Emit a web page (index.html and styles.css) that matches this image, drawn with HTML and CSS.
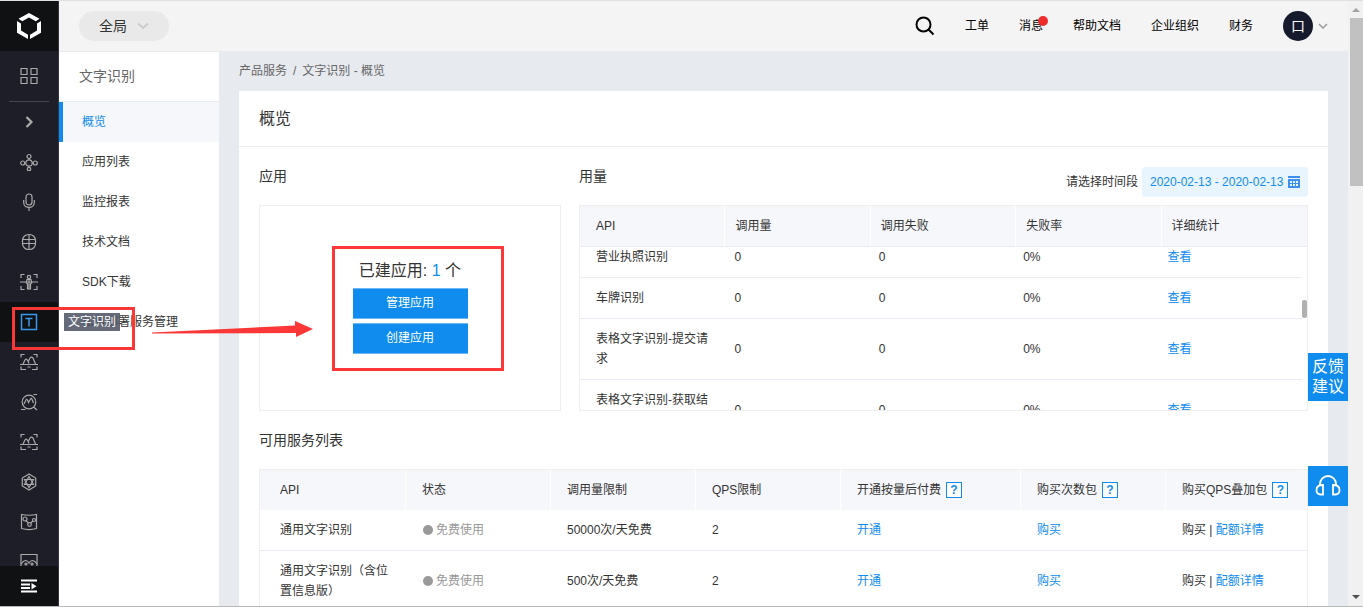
FILE: index.html
```html
<!DOCTYPE html>
<html lang="zh-CN">
<head>
<meta charset="utf-8">
<title>文字识别 - 概览</title>
<link rel="stylesheet" href="styles.css">
</head>
<body>
<div class="window">
  <nav class="rail" aria-label="产品导航">
    <a class="rail-logo" href="#" aria-label="首页">
      <svg width="26" height="28" viewBox="0 0 26 28" fill="#fff"><path d="M13 1 23.500 6.800 19.800 9.200 13 5.400 6.200 9.200 2.500 6.800z"/><path d="M1 9 5 11.400V18.600L12 22.700V27L1 20.700z"/><path d="M25 9 21 11.400V18.600L14 22.700V27L25 20.700z"/></svg>
    </a>
    <button class="rail-item rail-first" aria-label="全部产品">
      <svg width="18" height="18" viewBox="0 0 18 18"><path d="M1 1.500h6v6H1zM11 1.500h6v6h-6zM1 10.500h6v6H1zM11 10.500h6v6h-6z"/></svg>
    </button>
    <div class="rail-items">
      <button class="rail-item" aria-label="展开">
        <svg width="18" height="18" viewBox="0 0 18 18"><path d="M6.500 4 11.500 9l-5 5" stroke-width="2.200"/></svg>
      </button>
      <button class="rail-item" aria-label="集群">
        <svg width="18" height="18" viewBox="0 0 18 18"><circle cx="9" cy="10" r="3.200"/><circle cx="9" cy="3.500" r="2"/><circle cx="9" cy="16" r="1.700"/><circle cx="2.700" cy="10" r="2"/><circle cx="15.300" cy="10" r="2"/><path d="M9 5.500v1.300M9 13.200v1M4.700 10h1M12.200 10h1"/></svg>
      </button>
      <button class="rail-item" aria-label="语音技术">
        <svg width="18" height="18" viewBox="0 0 18 18"><rect x="6" y="1" width="6" height="11" rx="3"/><path d="M3.700 7v2.500c0 6.600 10.600 6.600 10.600 0V7M9 14.500V18"/></svg>
      </button>
      <button class="rail-item" aria-label="自然语言">
        <svg width="18" height="18" viewBox="0 0 18 18"><rect x="2.500" y="1.500" width="13" height="15" rx="6"/><path d="M2.500 6.500h13M2.500 10.500h13M9 1.500v15"/></svg>
      </button>
      <button class="rail-item" aria-label="人体分析">
        <svg width="18" height="18" viewBox="0 0 18 18"><path d="M1 5V1.500h3.500M13.500 1.500H17V5M1 13v3.500h3.500M13.500 16.500H17V13M0 9h18"/><circle cx="9" cy="4" r="1.700"/><path d="M7 6.500h4l.8 3-1.300 1.500v5H7.500v-5L6.200 9.500zM9 7v9"/></svg>
      </button>
      <button class="rail-item rail-active" aria-label="文字识别" aria-describedby="rail-tip">
        <svg width="18" height="18" viewBox="0 0 18 18"><path d="M1.500 1.500h15v15h-15z" stroke-width="1.500"/><path d="M5.500 5.500h7M9 5.500v8" stroke-width="1.500"/></svg>
        <span class="tip" id="rail-tip" role="tooltip">文字识别</span>
      </button>
      <button class="rail-item" aria-label="图像识别">
        <svg width="18" height="18" viewBox="0 0 18 18"><path d="M1 4.500V1.500h3.500M13.500 1.500H17v3M1 13.500v3h5M12 16.500h5v-3M0 11.500h18M3 11l2-4c1-1.500 2-1 3 1l1 2.500M8 9l2-4c1-1.500 2-1 3 0l2.500 6M7.500 14h3"/></svg>
      </button>
      <button class="rail-item" aria-label="图像搜索">
        <svg width="18" height="18" viewBox="0 0 18 18"><circle cx="9" cy="9" r="6.800"/><path d="M4 11l2-4c1-1.500 1.700 0 2.500 2.500L10.500 6c1-1.500 1.500 0 3 4M13.500 14l3.500 3M1 16.500h4.500M13.500 1.500H17"/></svg>
      </button>
      <button class="rail-item" aria-label="图像审核">
        <svg width="18" height="18" viewBox="0 0 18 18"><path d="M1 4.500V1.500h3.500M13.500 1.500H17v3M1 13.500v3h5M12 16.500h5v-3M0 11.500h18M3 11l2-4c1-1.500 2-1 3 1l1 2.500M8 9l2-4c1-1.500 2-1 3 0l2.500 6M7.500 14h3"/></svg>
      </button>
      <button class="rail-item" aria-label="知识图谱">
        <svg width="18" height="18" viewBox="0 0 18 18"><path d="M9 1 15.700 5v8L9 17 2.300 13V5z"/><path d="M9 3.500 13.500 11.500h-9zM9 14.500 4.500 6.500h9z"/></svg>
      </button>
      <button class="rail-item" aria-label="智能地图">
        <svg width="18" height="18" viewBox="0 0 18 18"><path d="M1.500 1.500c5 1 10 1 15 0v14c-5 1.500-10 1.500-15 0z"/><circle cx="5" cy="6" r="2"/><circle cx="9.500" cy="11.500" r="1.800"/><circle cx="14" cy="7" r="1.500"/><path d="M6 7.800 8.500 10M10.800 10l2-2"/></svg>
      </button>
      <button class="rail-item" aria-label="视频技术">
        <svg width="18" height="18" viewBox="0 0 18 18"><path d="M1 16.500v-15h16v15z"/><path d="M1 11c3-4.500 6-4.500 8-1 2-3.500 5-3.500 8 1"/><circle cx="6" cy="11" r="1"/><circle cx="12" cy="11" r="1"/></svg>
      </button>
    </div>
    <button class="rail-item rail-toggle" aria-label="展开菜单">
      <svg width="18" height="18" viewBox="0 0 18 18"><path d="M1 3.500h16M1 7.500h9M1 11h9M1 14.500h16" stroke-width="1.800"/><path d="M11.500 6v6.500L16.500 9.200z" fill="#fff" stroke="none"/></svg>
    </button>
  </nav>

  <div class="page">
    <header class="topbar">
      <button class="region">全局
        <svg width="14" height="14" viewBox="0 0 14 14"><path d="M2 4.500 7 9l5-4.500" fill="none" stroke="#ccc" stroke-width="2"/></svg>
      </button>
      <nav class="topnav">
        <button class="search" aria-label="搜索">
          <svg width="20" height="20" viewBox="0 0 20 20" fill="none" stroke="#000" stroke-width="2"><circle cx="8.500" cy="8.500" r="7"/><path d="m13.500 13.500 5 5"/></svg>
        </button>
        <a href="#">工单</a>
        <a class="has-news" href="#">消息</a>
        <a href="#">帮助文档</a>
        <a href="#">企业组织</a>
        <a href="#">财务</a>
        <button class="account" aria-label="账户">
          <span class="avatar">口</span>
          <svg width="10" height="10" viewBox="0 0 10 10"><path d="M1 3l4 4 4-4" fill="none" stroke="#999" stroke-width="1.500"/></svg>
        </button>
      </nav>
    </header>

    <div class="workspace">
      <aside class="sidenav">
        <h1>文字识别</h1>
        <a class="current" href="#">概览</a>
        <a href="#">应用列表</a>
        <a href="#">监控报表</a>
        <a href="#">技术文档</a>
        <a href="#">SDK下载</a>
        <a href="#">私有部署服务管理</a>
      </aside>

      <main class="content">
        <div class="breadcrumb"><a href="#">产品服务</a><span>/</span><span>文字识别 - 概览</span></div>
        <section class="card">
          <h2>概览</h2>
          <div class="card-body">
            <div class="columns">
              <section>
                <div class="section-head"><h3>应用</h3></div>
                <div class="apps">
                  <p>已建应用: <a href="#">1</a> 个</p>
                  <button>管理应用</button>
                  <button>创建应用</button>
                </div>
              </section>
              <section>
                <div class="section-head">
                  <h3>用量</h3>
                  <div class="period">
                    <label for="period">请选择时间段</label>
                    <span class="date-box">
                      <input id="period" type="text" value="2020-02-13 - 2020-02-13" readonly>
                      <svg width="12" height="12" viewBox="0 0 12 12"><path d="M0 0h12v12H0z" fill="#3d8ff0"/><path d="M0 2.500h12" stroke="#e8f5fe"/><path d="M2 5h8v5H2z" fill="#e8f5fe"/><path d="M2 7.500h8M4.500 5v5M7.500 5v5" stroke="#3d8ff0"/></svg>
                    </span>
                  </div>
                </div>
                <div class="usage">
                  <table class="usage-head">
                    <thead><tr><th>API</th><th>调用量</th><th>调用失败</th><th>失败率</th><th>详细统计</th></tr></thead>
                  </table>
                  <div class="usage-scroll">
                    <table>
                      <tbody>
                        <tr><td>营业执照识别</td><td>0</td><td>0</td><td>0%</td><td><a href="#">查看</a></td></tr>
                        <tr><td>车牌识别</td><td>0</td><td>0</td><td>0%</td><td><a href="#">查看</a></td></tr>
                        <tr><td>表格文字识别-提交请求</td><td>0</td><td>0</td><td>0%</td><td><a href="#">查看</a></td></tr>
                        <tr><td>表格文字识别-获取结果</td><td>0</td><td>0</td><td>0%</td><td><a href="#">查看</a></td></tr>
                      </tbody>
                    </table>
                    <i class="usage-thumb"></i>
                  </div>
                </div>
              </section>
            </div>

            <h3 class="list-title">可用服务列表</h3>
            <table class="services">
              <colgroup><col class="c-api"><col class="c-mid"><col class="c-mid"><col class="c-mid"><col class="c-wide"><col class="c-mid"><col></colgroup>
              <thead>
                <tr><th>API</th><th>状态</th><th>调用量限制</th><th>QPS限制</th><th>开通按量后付费<button class="help">?</button></th><th>购买次数包<button class="help">?</button></th><th>购买QPS叠加包<button class="help">?</button></th></tr>
              </thead>
              <tbody>
                <tr><td>通用文字识别</td><td class="free">免费使用</td><td>50000次/天免费</td><td>2</td><td><a href="#">开通</a></td><td><a href="#">购买</a></td><td>购买 | <a href="#">配额详情</a></td></tr>
                <tr><td>通用文字识别（含位置信息版）</td><td class="free">免费使用</td><td>500次/天免费</td><td>2</td><td><a href="#">开通</a></td><td><a href="#">购买</a></td><td>购买 | <a href="#">配额详情</a></td></tr>
              </tbody>
            </table>
          </div>
        </section>
      </main>
    </div>
  </div>

  <div class="scrollbar">
    <svg width="10" height="8" viewBox="0 0 10 8"><path d="M1 6l4-4 4 4z" fill="#a3a3a3"/></svg>
    <i></i>
    <svg class="down" width="10" height="8" viewBox="0 0 10 8"><path d="M1 2l4 4 4-4z" fill="#505050"/></svg>
  </div>

  <button class="feedback">反馈<br>建议</button>
  <button class="support" aria-label="在线客服">
    <svg width="26" height="22" viewBox="0 0 26 22" fill="none" stroke="#fff" stroke-width="1.800"><path d="M5 10V9a8 8 0 0 1 16 0v1"/><path d="M8 10v9.500H5.500a4 4 0 0 1-4-4.500C1.500 12 4 10 8 10zM18 10v9.500h2.500a4 4 0 0 0 4-4.500C24.500 12 22 10 18 10z"/></svg>
  </button>

  <i class="mark mark-nav"></i>
  <i class="mark mark-apps"></i>
  <svg class="mark-arrow" width="162" height="18" viewBox="0 0 162 18"><path d="M0 11.500 143 4.500V0L161 8 144 16V12L0 12.500z" fill="#fb3737"/></svg>
</div>
</body>
</html>
```
FILE: styles.css
```css
* { box-sizing: border-box; }

body {
  margin: 0;
  background: #fff;
  color: #333;
  font: 12px/20px "Liberation Sans", "Noto Sans CJK SC", sans-serif;
}

h1, h2, h3, p { margin: 0; font-weight: 400; }
a { color: #108cee; text-decoration: none; }
button {
  padding: 0;
  border: 0;
  background: none;
  color: inherit;
  font: inherit;
  cursor: pointer;
}
svg { display: block; flex: none; }
table { width: 100%; border-collapse: separate; border-spacing: 0; table-layout: fixed; }
th, td { text-align: left; font-weight: 400; }

.window {
  position: relative;
  display: flex;
  height: calc(100vh - 2px);
  overflow: hidden;
  border-top: 1px solid #e0e0e0;
  border-bottom: 1px solid #b9b9b9;
}

/* Product rail */
.rail {
  display: flex;
  flex: none;
  flex-direction: column;
  width: 59px;
  border-right: 1px solid #343440;
  background: #1e1e28;
}
.rail-logo {
  display: flex;
  flex: none;
  align-items: center;
  justify-content: center;
  height: 50px;
  background: #0f1112;
}
.rail-item {
  display: flex;
  flex: none;
  align-items: center;
  justify-content: center;
  width: 100%;
  height: 40px;
  fill: none;
  stroke: #aaa;
  stroke-width: 1.2;
}
.rail-first { height: 50px; }
.rail-items {
  flex: 1;
  min-height: 0;
  clip-path: inset(0 -100px 0 0);
}
.rail-items::before {
  display: block;
  height: 1px;
  margin: 0 9px;
  background: #45454e;
  content: "";
}
.rail-active { position: relative; background: #0f1112; stroke: #3a98ee; }
.rail-toggle { z-index: 1; background: #0f1112; stroke: #fff; }
.tip {
  position: absolute;
  z-index: 5;
  top: 11px;
  left: 64px;
  padding: 0 4px;
  background: rgba(80, 85, 101, .88);
  color: #fff;
  line-height: 18px;
  white-space: nowrap;
}

/* Top bar */
.page { display: flex; flex: 1; flex-direction: column; min-width: 0; }
.rail { z-index: 2; }
.topbar {
  display: flex;
  flex: none;
  align-items: center;
  justify-content: space-between;
  height: 51px;
  padding: 0 20px;
  border-bottom: 1px solid #e7eaef;
  background: #f4f4f4;
}
.region {
  display: flex;
  align-items: center;
  gap: 9px;
  height: 30px;
  padding: 0 19px 0 20px;
  border-radius: 15px;
  background: #e9e9e9;
  font-size: 14px;
}
.topnav { display: flex; align-items: center; gap: 30px; }
.topnav a { color: #000; }
.has-news { position: relative; }
.has-news::after {
  position: absolute;
  top: 0;
  right: -5px;
  width: 10px;
  height: 10px;
  border-radius: 50%;
  background: #ee2c2c;
  content: "";
}
.account { display: flex; align-items: center; gap: 5px; }
.avatar {
  width: 30px;
  border-radius: 50%;
  background: #151b2c;
  color: #fff;
  font-size: 14px;
  line-height: 30px;
}

/* Side navigation */
.workspace { display: flex; flex: 1; min-height: 0; }
.sidenav { flex: none; width: 160px; background: #fff; }
.sidenav h1 {
  padding-left: 20px;
  border-bottom: 1px solid #e7eaef;
  color: #666;
  font-size: 14px;
  line-height: 49px;
}
.sidenav a {
  display: block;
  padding-left: 19px;
  border-left: 4px solid transparent;
  color: #333;
  line-height: 40px;
}
.sidenav .current { border-color: #108cee; background: #f6f7fb; color: #108cee; }

/* Content */
.content {
  flex: 1;
  min-width: 0;
  padding: 0 20px;
  overflow: hidden;
  background: #e7eaef;
}
.breadcrumb { display: flex; gap: 6px; color: #666; line-height: 39px; }
.breadcrumb a { color: inherit; }
.card { background: #fff; }
.card h2 {
  padding: 0 20px;
  border-bottom: 1px solid #ebebeb;
  font-size: 16px;
  line-height: 55px;
}
.card-body { padding: 20px; }
.columns { display: grid; grid-template-columns: 302px 1fr; gap: 18px; }
.section-head { display: flex; justify-content: space-between; height: 38px; }
h3 { font-size: 14px; line-height: 18px; }
.period { display: flex; gap: 4px; line-height: 30px; }
.date-box {
  display: flex;
  align-items: center;
  gap: 4px;
  height: 30px;
  padding: 0 8px;
  border-radius: 4px;
  background: #e8f5fe;
}
.date-box input {
  width: 134px;
  padding: 0;
  border: 0;
  background: none;
  color: #108cee;
  font: inherit;
}

.apps {
  display: flex;
  flex-direction: column;
  align-items: center;
  gap: 4px;
  height: 206px;
  padding-top: 55px;
  border: 1px solid #eee;
}
.apps p { padding-bottom: 3px; font-size: 16px; }
.apps button {
  width: 115px;
  border: 1px solid #6cb8f5;
  border-width: 1px 0;
  background: #108cee;
  color: #fff;
  line-height: 29px;
}

.usage {
  display: flex;
  flex-direction: column;
  height: 206px;
  border: 1px solid #eee;
}
.usage-head th {
  padding: 10px;
  border-right: 1px solid #fff;
  border-bottom: 1px solid #ebebf2;
  background: #f6f7fb;
}
.usage th:first-child, .usage td:first-child { padding-left: 16px; }
.usage th:last-child { border-right: 0; }
.usage-scroll {
  position: relative;
  flex: 1;
  min-height: 0;
  padding-right: 5px;
  overflow: hidden;
}
.usage-scroll table { margin-top: -10px; }
.usage td { padding: 10px; border-bottom: 1px solid #ebebf5; }
.usage-thumb {
  position: absolute;
  top: 53px;
  right: 0;
  width: 5px;
  height: 18px;
  border-radius: 2px;
  background: #b0b0b0;
}

.list-title { padding: 20px 0; }
.services { border: 1px solid #eee; }
.c-api { width: 146px; }
.c-mid { width: 145px; }
.c-wide { width: 180px; }
.services th, .services td { padding: 10px 12px 10px 16px; white-space: nowrap; }
.services th:first-child, .services td:first-child { padding-left: 20px; white-space: normal; }
.services th { border-right: 1px solid #fff; background: #f6f7fb; }
.services th:last-child { border-right: 0; }
.services td { border-bottom: 1px solid #ebebf5; }
.help {
  width: 16px;
  margin-left: 5px;
  border: 1px solid #108cee;
  background: #fff;
  color: #108cee;
  font-weight: 700;
  line-height: 14px;
}
.services .free { color: #999; }
.free::before {
  display: inline-block;
  width: 10px;
  height: 10px;
  margin: 0 3px 0 1px;
  border-radius: 50%;
  background: #999;
  vertical-align: -1px;
  content: "";
}

/* Page scrollbar */
.scrollbar {
  display: flex;
  flex: none;
  flex-direction: column;
  align-items: center;
  width: 15px;
  padding: 5px 0;
  background: #f1f1f1;
}
.scrollbar i { align-self: flex-end; width: 13px; height: 168px; margin-top: 4px; background: #c1c1c1; }
.scrollbar .down { margin-top: auto; }

/* Floating actions */
.feedback, .support {
  position: absolute;
  right: 15px;
  width: 40px;
  background: #108cee;
  color: #fff;
}
.feedback { top: 352px; padding: 4px 0; font-size: 16px; }
.support {
  top: 465px;
  display: flex;
  align-items: center;
  justify-content: center;
  height: 40px;
}

/* Annotations */
.mark { position: absolute; z-index: 6; border: 3px solid #fb3737; }
.mark-nav { top: 306px; left: 12px; width: 123px; height: 43px; }
.mark-apps { top: 245px; left: 332px; width: 172px; height: 125px; }
.mark-arrow { position: absolute; z-index: 6; top: 320px; left: 152px; }
```
